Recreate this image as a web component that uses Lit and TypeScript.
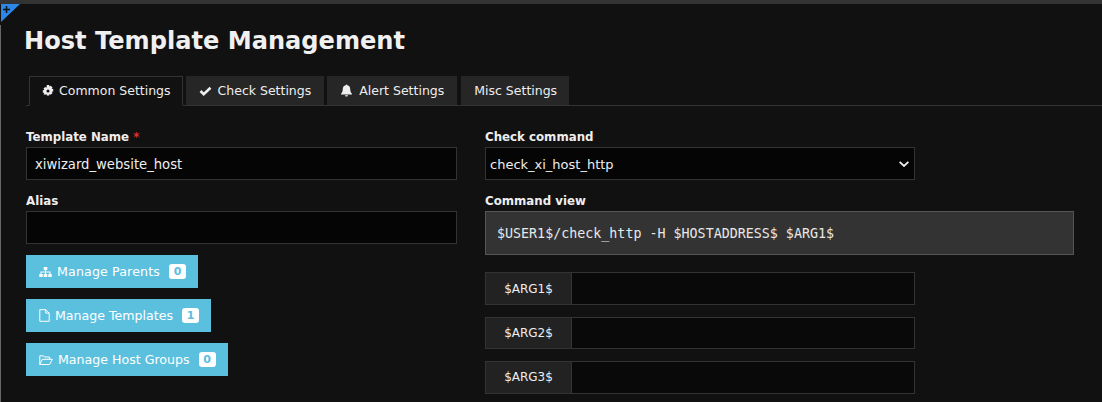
import { LitElement, html, css, svg } from "lit";
import { customElement } from "lit/decorators.js";

const gear = svg`<svg class="ico" width="12" height="12" viewBox="0 0 12 12"><path fill-rule="evenodd" fill="currentColor" d="M4.800 0h2.400l.3 1.500 1.300-.8 1.700 1.700-.8 1.300 1.500.3v2.400l-1.500.3.800 1.300-1.700 1.700-1.300-.8-.3 1.500H4.800l-.3-1.500-1.300.8L1.500 9.200l.8-1.300L.8 7.600V5.200l1.500-.3-.8-1.300 1.700-1.700 1.300.8zM6 4.500a1.500 1.500 0 1 0 0 3 1.500 1.500 0 0 0 0-3z" transform="translate(0 0)"/></svg>`;
const check = svg`<svg class="ico" width="13" height="12" viewBox="0 0 13 12"><path fill="none" stroke="currentColor" stroke-width="2.600" d="M1.500 6l3.200 3.200L11.500 2.800"/></svg>`;
const bell = svg`<svg class="ico" width="13" height="13" viewBox="0 0 13 13"><path fill="currentColor" d="M6.500.5c.5 0 .8.300.8.800 2 .3 2.900 1.900 2.900 3.700 0 2.400.7 3.700 1.800 4.700v.8H1v-.8C2.100 8.700 2.800 7.400 2.800 5c0-1.800.9-3.400 2.900-3.700 0-.5.300-.8.800-.8zM5 11.300h3c0 .8-.7 1.300-1.500 1.300S5 12.100 5 11.300z"/></svg>`;
const sitemap = svg`<svg class="ico" width="13" height="12" viewBox="0 0 13 12"><path fill="currentColor" d="M4.700 1h3.600v3H7v1.500h4.500V8h1.200v3H9.300V8h1.200V6.500H7V8h1.300v3H4.700V8H6V6.500H2.500V8h1.200v3H.3V8h1.200V5.500H6V4H4.700z"/></svg>`;
const file = svg`<svg class="ico" width="11" height="13" viewBox="0 0 11 13"><path fill="none" stroke="currentColor" d="M.8.700h6l3.400 3.400v8.200H.8zM6.800.700v3.400h3.400"/></svg>`;
const folder = svg`<svg class="ico" width="14" height="12" viewBox="0 0 14 12"><path fill="none" stroke="currentColor" d="M.8 10.500V1.800h3.800l1 1.200h5v2M.8 10.500h9.800L13.300 5.300H3.300z"/></svg>`;
const chevron = svg`<svg class="chev" width="10" height="6" viewBox="0 0 10 6"><path fill="none" stroke="currentColor" stroke-width="1.800" d="M.6.800L5 5l4.400-4.200"/></svg>`;

@customElement("app-root")
export class AppRoot extends LitElement {
  static styles = css`
    :host {
      display: block;
      position: relative;
      width: 1102px;
      height: 402px;
      overflow: hidden;
      background: #111;
      color: #eee;
      font-family: "DejaVu Sans", sans-serif;
      font-size: 13px;
    }
    .topbar { height: 4px; background: #333; }
    .corner {
      position: absolute; left: 1px; top: 4px; width: 0; height: 0;
      border-top: 18px solid #2b87e8; border-right: 19px solid transparent;
    }
    .plus { position: absolute; left: 3px; top: 6px; width: 7px; height: 7px; color: #111; }
    .rail { position: absolute; left: 0; top: 25px; bottom: 0; width: 1px; background: #666; }
    h1 {
      margin: 0; padding: 21px 0 0 24px; font-size: 24.1px; line-height: 32px; font-weight: 700; color: #f0f0f0;
    }
    .tabs {
      display: flex; margin: 19px 0 0 26px; padding-left: 3px; height: 29px;
      border-bottom: 1px solid #333; gap: 3px; font-size: 12.5px;
    }
    .tab {
      display: flex; align-items: center; gap: 6px; padding: 0 13px; height: 29px;
      background: #262626; color: #eee;
    }
    .tab.active {
      background: #111; border: 1px solid #333; border-bottom: 1px solid #111;
      height: 30px; box-sizing: border-box; padding: 0 11px 1px 12px; gap: 5px;
    }
    .tab.t4 { margin-left: 1px; padding-right: 12px; }
    .ico { display: block; flex: none; }
    .cols { display: flex; padding: 22px 0 0 26px; }
    .left { width: 431px; margin-right: 28px; }
    .right { width: 589px; }
    label { display: block; font-weight: 700; font-size: 11.8px; line-height: 17px; color: #eee; padding-top: 1px; margin-bottom: 1px; }
    .req { color: #d9322e; }
    .field {
      box-sizing: border-box; height: 33px; background: #050505; border: 1px solid #333;
      display: flex; align-items: center; padding: 1px 8px 0; margin-bottom: 12px; color: #eee; font-size: 13.2px;
    }
    .field.sel { width: 430px; justify-content: space-between; padding: 1px 5px 0 4px; font-size: 13px; }
    .chev { color: #eee; }
    .cmd {
      box-sizing: border-box; height: 44px; background: #333; border: 1px solid #555;
      display: flex; align-items: center; padding: 0 11px;
      font-family: "DejaVu Sans Mono", monospace; font-size: 13.33px; color: #e8e8e8; margin-bottom: 17.4px;
    }
    .btns { display: flex; flex-direction: column; align-items: flex-start; gap: 11px; margin-top: -1px; }
    .btn {
      height: 33px; display: flex; align-items: center; padding: 0 12px 0 13px; background: #5bc0de; color: #fff; font-size: 12.6px;
    }
    .btn .ico { margin-right: 5px; }
    .btn.wide { letter-spacing: 0.15px; }
    .badge {
      background: #fff; color: #5bc0de; font-weight: 700; font-size: 11px; line-height: 15px;
      padding: 0 4px; border-radius: 3px; margin-left: 9px; letter-spacing: 0;
      height: 15px; min-width: 9px; text-align: center;
    }
    .group { display: flex; width: 430px; height: 32.67px; margin-bottom: 11.67px; box-sizing: border-box; border: 1px solid #333; }
    .addon {
      width: 85px; flex: none; background: #222; border-right: 1px solid #333; display: flex; align-items: center; justify-content: center; color: #eee; font-size: 12px;
    }
    .inp { flex: 1; background: #090909; }
  `;
  render() {
    const args = ["$ARG1$", "$ARG2$", "$ARG3$"];
    return html`
      <div class="topbar"></div>
      <div class="rail"></div>
      <div class="corner"></div>
      <svg class="plus" viewBox="0 0 7 7"><path fill="none" stroke="currentColor" stroke-width="1.500" d="M3.500 0v7M0 3.500h7"/></svg>
      <h1>Host Template Management</h1>
      <div class="tabs">
        <div class="tab active">${gear}<span>Common Settings</span></div>
        <div class="tab">${check}<span>Check Settings</span></div>
        <div class="tab">${bell}<span>Alert Settings</span></div>
        <div class="tab t4"><span>Misc Settings</span></div>
      </div>
      <div class="cols">
        <div class="left">
          <label>Template Name <span class="req">*</span></label>
          <div class="field">xiwizard_website_host</div>
          <label>Alias</label>
          <div class="field"></div>
          <div class="btns">
            <div class="btn wide">${sitemap}<span>Manage Parents</span><span class="badge">0</span></div>
            <div class="btn">${file}<span>Manage Templates</span><span class="badge">1</span></div>
            <div class="btn">${folder}<span>Manage Host Groups</span><span class="badge">0</span></div>
          </div>
        </div>
        <div class="right">
          <label>Check command</label>
          <div class="field sel"><span>check_xi_host_http</span>${chevron}</div>
          <label>Command view</label>
          <div class="cmd">$USER1$/check_http -H $HOSTADDRESS$ $ARG1$</div>
          ${args.map((a) => html`<div class="group"><div class="addon">${a}</div><div class="inp"></div></div>`)}
        </div>
      </div>
    `;
  }
}
